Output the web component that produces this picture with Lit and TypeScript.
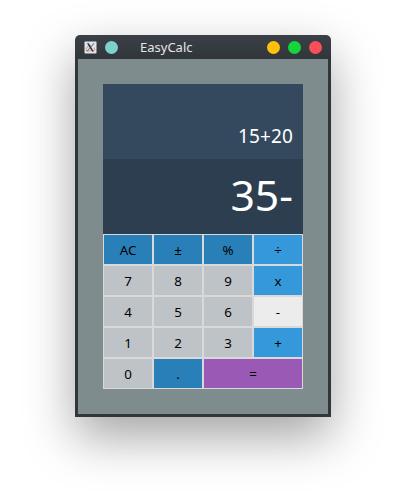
import { LitElement, html, css } from "lit";
import { customElement, property } from "lit/decorators.js";
import { classMap } from "lit/directives/class-map.js";

type Kind = "digit" | "func" | "op" | "hover" | "equals";

const KEYS: [string, Kind][] = [
  ["AC", "func"], ["±", "func"], ["%", "func"], ["÷", "op"],
  ["7", "digit"], ["8", "digit"], ["9", "digit"], ["x", "op"],
  ["4", "digit"], ["5", "digit"], ["6", "digit"], ["-", "hover"],
  ["1", "digit"], ["2", "digit"], ["3", "digit"], ["+", "op"],
  ["0", "digit"], [".", "func"], ["=", "equals"],
];

@customElement("title-bar")
export class TitleBar extends LitElement {
  @property() label = "";

  static styles = css`
    :host {
      display: flex;
      align-items: center;
      box-sizing: border-box;
      height: 24px;
      padding: 0 9px 0 9px;
      background: linear-gradient(#3b4048, #31363b);
      border-radius: 5px 5px 0 0;
    }
    .icon { width: 13px; height: 13px; margin-right: 8px; flex: none; display: block; }
    .dot { width: 13px; height: 13px; border-radius: 50%; flex: none; }
    .teal { background: #7dd2ca; }
    .amber { background: #ffc10a; }
    .green { background: #15d53c; }
    .red { background: #f84f58; }
    .label { flex: 1; padding-left: 22px; font-size: 13px; line-height: 24px; color: #e4e6e8; }
    .controls { display: flex; gap: 8px; }
  `;

  render() {
    return html`
      <svg class="icon" viewBox="0 0 13 13">
        <rect x="0.5" y="0.5" width="12" height="12" rx="0.8" fill="#dde4ee" />
        <path d="M7.2 5C4.8 4.2 2 6.3 2.2 8.9c.2 1.6 2.8 1.7 4.6.7M10.2 6.4c.7 1.5.1 3-1 3.6" fill="none" stroke="#e79a80" stroke-width="1.1" />
        <path d="M3 2.2h1.9l4.9 8.2H8z" fill="#34363c" />
        <path d="M10 2.2 7.1 5.8M5.7 7.2 3.2 10.2" stroke="#4a4c52" stroke-width="0.9" />
      </svg>
      <span class="dot teal"></span>
      <span class="label">${this.label}</span>
      <span class="controls">
        <span class="dot amber"></span>
        <span class="dot green"></span>
        <span class="dot red"></span>
      </span>
    `;
  }
}

@customElement("app-root")
export class AppRoot extends LitElement {
  static styles = css`
    :host {
      display: flex;
      justify-content: center;
      align-items: flex-start;
      box-sizing: border-box;
      width: 406px;
      height: 502px;
      padding-top: 35px;
      overflow: hidden;
      background: #fff;
      font-family: "Noto Sans", sans-serif;
    }
    .window {
      width: 256px;
      border-radius: 5px 5px 0 0;
      box-shadow: 0 20px 50px rgba(0, 0, 0, 0.36);
    }
    .body {
      padding: 25px;
      background: #7f8c8d;
      border: 3px solid #31363b;
      border-top: 0;
    }
    .display {
      display: flex;
      justify-content: flex-end;
      box-sizing: border-box;
      height: 75px;
      padding-right: 10px;
      color: #fff;
    }
    .history { background: #34495e; font-size: 19px; line-height: 26px; padding-top: 39px; letter-spacing: 0.15px; }
    .result { background: #2c3e50; font-size: 42.67px; line-height: 71px; }
    .keys {
      display: grid;
      grid-template-columns: repeat(4, 50px);
      grid-auto-rows: 31px;
    }
    .key {
      box-sizing: border-box;
      margin: 0;
      padding: 1px 0 0;
      border: 1px solid #d9d9d9;
      border-radius: 0;
      font: 13.33px/28px "Noto Sans", sans-serif;
      text-align: center;
      color: #000;
    }
    .digit { background: #bdc3c7; }
    .func { background: #2980b9; }
    .op { background: #3498db; }
    .hover { background: #ececec; }
    .equals { background: #9b59b6; grid-column: span 2; }
  `;

  render() {
    return html`
      <div class="window">
        <title-bar label="EasyCalc"></title-bar>
        <div class="body">
          <div class="display history">15+20</div>
          <div class="display result">35-</div>
          <div class="keys">
            ${KEYS.map(([text, kind]) => html`<button class=${classMap({ key: true, [kind]: true })}>${text}</button>`)}
          </div>
        </div>
      </div>
    `;
  }
}
